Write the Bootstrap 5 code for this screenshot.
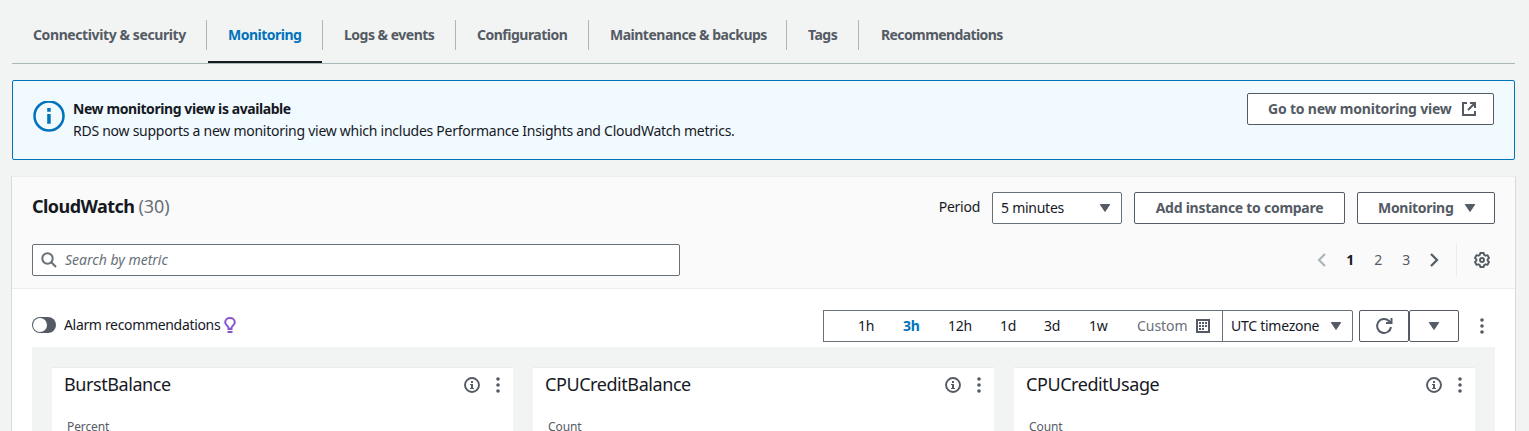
<!DOCTYPE html>
<html lang="en">
<head>
<meta charset="utf-8">
<meta name="viewport" content="width=device-width, initial-scale=1">
<title>RDS Monitoring</title>
<link href="https://cdn.jsdelivr.net/npm/bootstrap@5.3.0/dist/css/bootstrap.min.css" rel="stylesheet">
<style>
body{font:14px/22px "Noto Sans","Open Sans",sans-serif;background:#f2f3f3;color:#16191f;height:431px;overflow:hidden;letter-spacing:-.26px}
svg{display:block;flex:none}
.page{margin:0 14px 0 12px}
.tabs{height:64px;padding-top:20px;border-bottom:1px solid #aab7b8;flex-wrap:nowrap}
.tabs .nav-item{height:43px;position:relative}
.tabs .nav-link{height:30px;line-height:30px;padding:0 0 0 21px;color:#545b64;font-weight:700;border-right:1px solid #aab7b8;white-space:nowrap;letter-spacing:-.5px}
.tabs .t1 .nav-link{letter-spacing:-.4px}
.tabs .nav-item:last-child .nav-link{border:0;padding-left:22px;letter-spacing:-.6px}
.tabs .nav-link.active{color:#0073bb}
.tabs .nav-link.active::after{content:"";position:absolute;left:1px;right:1px;bottom:0;height:2px;background:#16191f}
.t1{width:195px}.t2{width:116px}.t3,.t4{width:133px}.t5{width:198px}.t6{width:72px}.t7{width:160px}
.flash{height:80px;margin-top:16px;border:1px solid #0073bb;border-radius:2px;background:#f1faff;padding:12px 20px 0}
.flash-text{padding-top:5px;margin-left:8px}
.flash b{display:block;font-weight:700;letter-spacing:-.42px}
.aws{height:32px;border:1px solid #545b64;border-radius:2px;background:#fff;color:#545b64;font-weight:700;white-space:nowrap;padding:0 20px;letter-spacing:-.2px;font-size:14px;line-height:30px}
.aws:hover{background:#fafafa;color:#16191f}
.w-view{width:247px;padding-right:16px}.w-add{width:211px;letter-spacing:-.27px}.w-mon{width:138px;padding-right:18px;letter-spacing:-.3px}
.panel{margin:16px -1px 0;width:1505px;border:1px solid #d5dbdb;border-top-color:#eaeded;background:#fff;height:270px}
.panel-head{height:112px;background:#fafafa;border-bottom:1px solid #eaeded;padding:15px 20px 0 20px}
.panel-head h2{font-size:18px;line-height:28px;font-weight:700;margin:0;letter-spacing:-.55px}
.panel-head h2 span{font-weight:400;color:#687078;letter-spacing:-.1px}
.selectbox{height:32px;border:1px solid #687078;border-radius:2px;background:#fff;padding:0 10px 0 8px;color:#16191f}
.w-period{width:130px}
.search{width:648px;height:32px;border:1px solid #687078;border-radius:2px;background:#fff;color:#687078;font-style:italic;padding-left:8px;letter-spacing:0}
.pages{color:#545b64;height:32px}
.pages span{width:28px;text-align:center}
.pages .now{color:#16191f;font-weight:700}
.gear{border-left:1px solid #eaeded;height:32px;width:39px;margin-left:8px;padding-left:17px}
.bar{height:58px;padding:21px 20px 0 20px}
.switch{width:24px;height:16px;border-radius:8px;background:#545b64;padding:1px}
.switch i{display:block;width:14px;height:14px;border-radius:50%;background:#fff}
.alarm{letter-spacing:-.33px}
.times{width:400px;height:32px;border:1px solid #687078;border-right:0;background:#fff}
.times span{white-space:nowrap}
.m1{margin-left:34px;width:45px}.m2{width:45px}.m3{width:52px}.m4{width:44px}.m5{width:45px}.m6{width:48px}
.m2{color:#0073bb;font-weight:700}
.m7{color:#687078;width:59px;letter-spacing:-.05px}
.zone{width:131px;margin-left:-1px;border-radius:0 2px 2px 0}
.icon-btn{width:50px;padding:0}
.board{background:#f2f3f3;height:90px;margin:0 20px;padding:20px 20px 0 20px;gap:20px}
.metric{flex:1 1 0;background:#fff;border-top:1px solid #eaeded;padding:5px 9px 0 12px;height:72px;min-width:0}
.metric h3{font-size:18px;line-height:24px;font-weight:400;margin:-1px 0 1px;letter-spacing:-.43px}
.unit{font-size:12px;line-height:16px;color:#545b64;margin:22px 0 0 3px;letter-spacing:-.1px}
.reload{margin-left:6px}
.more{margin:8px 11px 0 21px}
.kebab{margin:0 4px 0 16px}
</style>
</head>
<body>
<svg class="d-none" aria-hidden="true">
<symbol id="caret" viewBox="0 0 12 10"><path d="M1.300 1.500h9.400L6 8.500z" fill="#545b64" stroke="#545b64" stroke-linejoin="round"/></symbol>
<symbol id="dots" viewBox="0 0 4 16"><circle cx="2" cy="2" r="1.800"/><circle cx="2" cy="8" r="1.800"/><circle cx="2" cy="14" r="1.800"/></symbol>
<symbol id="info" viewBox="0 0 16 16"><circle cx="8" cy="8" r="7" fill="none" stroke="#545b64" stroke-width="1.900"/><path d="M7 4h2v2H7zM6 7h3v4h1v1H6v-1h1V8H6z" fill="#545b64"/></symbol>
</svg>
<main class="page">
<ul class="nav tabs">
<li class="nav-item t1"><a class="nav-link" href="#">Connectivity &amp; security</a></li>
<li class="nav-item t2"><a class="nav-link active" href="#">Monitoring</a></li>
<li class="nav-item t3"><a class="nav-link" href="#">Logs &amp; events</a></li>
<li class="nav-item t4"><a class="nav-link" href="#">Configuration</a></li>
<li class="nav-item t5"><a class="nav-link" href="#">Maintenance &amp; backups</a></li>
<li class="nav-item t6"><a class="nav-link" href="#">Tags</a></li>
<li class="nav-item t7"><a class="nav-link" href="#">Recommendations</a></li>
</ul>
<section class="flash d-flex align-items-start">
<svg class="mt-2" width="32" height="32" viewBox="0 0 32 32"><circle cx="16" cy="15" r="14.500" fill="none" stroke="#0073bb" stroke-width="2.500"/><path d="M14.200 7h3.500v3.700h-3.500zM14.200 13h3.500v9.700h-3.500z" fill="#0073bb"/></svg>
<div class="flash-text flex-grow-1"><b>New monitoring view is available</b><span class="desc">RDS now supports a new monitoring view which includes Performance Insights and CloudWatch metrics.</span></div>
<button class="btn aws w-view d-flex align-items-center justify-content-between"><span>Go to new monitoring view</span><svg width="16" height="16" viewBox="0 0 16 16" fill="none" stroke="#545b64" stroke-width="2"><path d="M6 2H2v12h12v-4M9 2h5v5M14 2L7 9"/></svg></button>
</section>
<section class="panel">
<header class="panel-head">
<div class="d-flex">
<h2 class="me-auto">CloudWatch <span>(30)</span></h2>
<div class="d-flex align-items-start gap-2">
<span class="period me-1 mt-1">Period</span>
<div class="selectbox w-period d-flex align-items-center justify-content-between me-1"><span>5 minutes</span><svg width="12" height="10"><use href="#caret"/></svg></div>
<button class="btn aws w-add me-1">Add instance to compare</button>
<button class="btn aws w-mon d-flex align-items-center"><span class="me-auto">Monitoring</span><svg width="12" height="10"><use href="#caret"/></svg></button>
</div>
</div>
<div class="d-flex align-items-center justify-content-between mt-3 pt-1">
<div class="search d-flex align-items-center"><svg class="me-2" width="16" height="16" viewBox="0 0 16 16" fill="none" stroke="#687078" stroke-width="2"><circle cx="6.500" cy="6.500" r="5.200"/><path d="M10.300 10.300L15 15"/></svg><span>Search by metric</span></div>
<div class="pages d-flex align-items-center">
<span><svg class="mx-auto" width="16" height="16" viewBox="0 0 16 16" fill="none" stroke="#aab7b8" stroke-width="2.200"><path d="M11 2L5 8l6 6"/></svg></span><span class="now">1</span><span>2</span><span>3</span><span><svg class="mx-auto" width="16" height="16" viewBox="0 0 16 16" fill="none" stroke="#545b64" stroke-width="2.200"><path d="M5 2l6 6-6 6"/></svg></span>
<div class="gear d-flex align-items-center"><svg width="16" height="16" viewBox="0 0 16 16" fill="none" stroke="#545b64" stroke-width="1.900" stroke-linejoin="round"><path d="M6.300 1h3.400l.5 2 1.300.7 2-.6L15 6l-1.400 1.400v1.200L15 10l-1.500 2.900-2-.6-1.300.7-.5 2H6.300l-.5-2-1.300-.7-2 .6L1 10l1.400-1.400V7.400L1 6l1.500-2.900 2 .6L5.800 3z"/><circle cx="8" cy="8" r="2"/></svg></div>
</div>
</div>
</header>
<div class="bar d-flex align-items-start">
<div class="d-flex align-items-center me-auto pt-1"><span class="switch"><i></i></span><span class="alarm ms-2">Alarm recommendations</span>
<svg class="ms-1" width="12" height="16" viewBox="0 0 12 16" fill="none" stroke="#8456ce" stroke-width="2"><path d="M4.500 12V10.500C3.800 8.700 1.200 7.700 1.200 5.200a4.800 4.200 0 0 1 9.600 0c0 2.500-2.600 3.500-3.300 5.300V12M3.500 12h5M3.500 15h5"/></svg></div>
<div class="times d-flex align-items-center"><span class="m1">1h</span><span class="m2">3h</span><span class="m3">12h</span><span class="m4">1d</span><span class="m5">3d</span><span class="m6">1w</span><span class="m7">Custom</span><svg width="14" height="14" viewBox="0 0 14 14"><path d="M1 1h12v12H1z" fill="none" stroke="#545b64" stroke-width="2"/><path d="M3 3h2v2H3zM6 3h2v2H6zM9 3h2v2H9zM3 6h2v2H3zM6 6h2v2H6zM9 6h2v2H9zM3 9h2v2H3zM6 9h2v2H6z" fill="#545b64"/></svg></div>
<div class="selectbox zone d-flex align-items-center justify-content-between"><span>UTC timezone</span><svg width="12" height="10"><use href="#caret"/></svg></div>
<div class="d-flex reload"><button class="btn aws icon-btn d-flex align-items-center justify-content-center"><svg width="18" height="18" viewBox="0 0 18 18" fill="none" stroke="#545b64" stroke-width="2"><path d="M16 10a7 7 0 1 1-2-6l2 2M16.500 1v5H11"/></svg></button><button class="btn aws icon-btn d-flex align-items-center justify-content-center"><svg width="12" height="10"><use href="#caret"/></svg></button></div>
<svg class="more" width="4" height="16" fill="#545b64"><use href="#dots"/></svg>
</div>
<div class="board d-flex">
<article class="metric"><div class="d-flex align-items-center"><h3 class="me-auto">BurstBalance</h3><svg width="16" height="16"><use href="#info"/></svg><svg class="kebab" width="4" height="16" fill="#545b64"><use href="#dots"/></svg></div><div class="unit">Percent</div></article>
<article class="metric"><div class="d-flex align-items-center"><h3 class="me-auto">CPUCreditBalance</h3><svg width="16" height="16"><use href="#info"/></svg><svg class="kebab" width="4" height="16" fill="#545b64"><use href="#dots"/></svg></div><div class="unit">Count</div></article>
<article class="metric"><div class="d-flex align-items-center"><h3 class="me-auto">CPUCreditUsage</h3><svg width="16" height="16"><use href="#info"/></svg><svg class="kebab" width="4" height="16" fill="#545b64"><use href="#dots"/></svg></div><div class="unit">Count</div></article>
</div>
</section>
</main>
<script src="https://cdn.jsdelivr.net/npm/bootstrap@5.3.0/dist/js/bootstrap.bundle.min.js"></script>
</body>
</html>
